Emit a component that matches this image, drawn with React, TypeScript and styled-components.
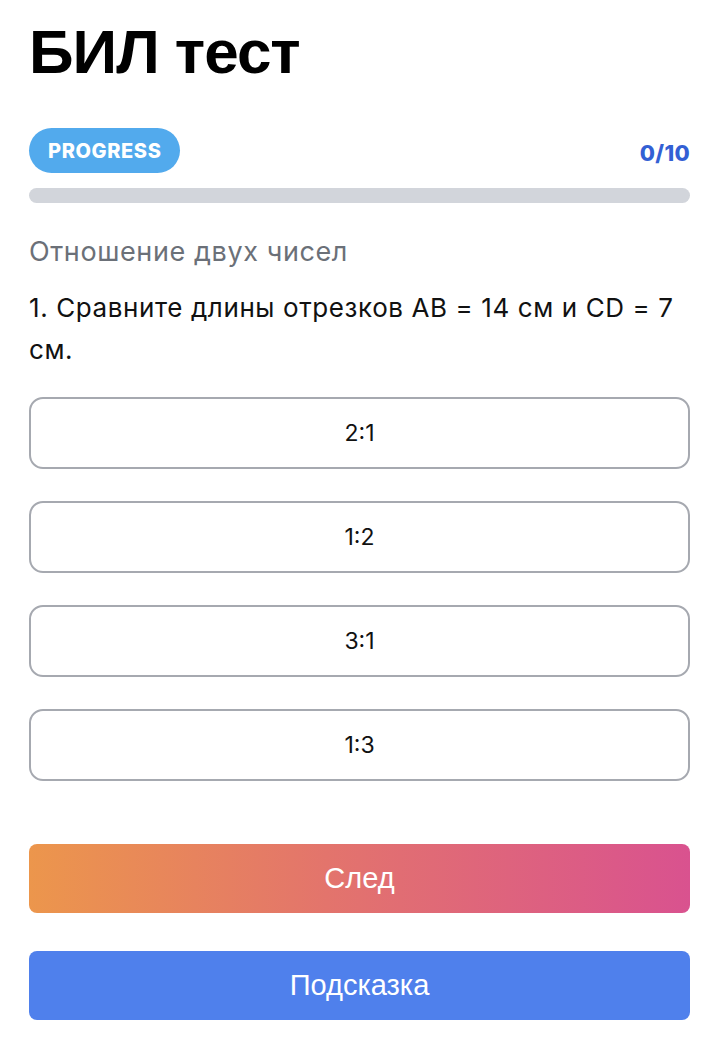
import React from 'react';
import styled, { createGlobalStyle } from 'styled-components';

const GlobalStyle = createGlobalStyle`
  body {
    margin: 0;
    background: #ffffff;
  }
`;

const Page = styled.div`
  padding: 12px 27px 26px 29px;
  display: flex;
  flex-direction: column;
  font-family: 'Inter', 'Noto Sans', sans-serif;
`;

const Title = styled.h1`
  margin: 0;
  font-family: 'Liberation Sans', Arial, sans-serif;
  font-size: 62px;
  font-weight: 700;
  letter-spacing: -1px;
  color: #000;
  line-height: 80px;
`;

const ProgressHeader = styled.div`
  margin-top: 36px;
  display: flex;
  align-items: center;
  justify-content: space-between;
`;

const Badge = styled.span`
  display: inline-flex;
  align-items: center;
  height: 45px;
  padding: 0 19px;
  border-radius: 23px;
  background: #52aaed;
  color: #fff;
  font-size: 20px;
  font-weight: 800;
  letter-spacing: 0.6px;
`;

const Counter = styled.span`
  font-size: 22px;
  font-weight: 800;
  color: #3360d4;
  margin-top: 4px;
  letter-spacing: 0.3px;
`;

const Track = styled.div`
  margin-top: 15px;
  height: 15px;
  border-radius: 8px;
  background: #d2d5db;
  overflow: hidden;
`;

const Fill = styled.div`
  height: 100%;
  background: #52aaed;
`;

const Topic = styled.div`
  margin-top: 32px;
  font-size: 27px;
  color: #6b7078;
  letter-spacing: 0.6px;
`;

const Question = styled.p`
  margin: 19px 0 0;
  font-size: 26px;
  line-height: 42px;
  color: #111;
  letter-spacing: 0.6px;
`;

const Options = styled.div`
  margin-top: 26px;
  display: flex;
  flex-direction: column;
  gap: 32px;
`;

const Option = styled.button`
  height: 72px;
  border: 2px solid #a6a9b0;
  border-radius: 14px;
  background: #fff;
  font-family: 'Inter', 'Noto Sans', sans-serif;
  font-size: 23px;
  color: #111;
  cursor: pointer;
`;

const Actions = styled.div`
  margin-top: 63px;
  display: flex;
  flex-direction: column;
  gap: 38px;
`;

const ActionButton = styled.button<{ $variant: 'next' | 'hint' }>`
  height: 69px;
  border: none;
  border-radius: 8px;
  color: #fff;
  font-family: 'Liberation Sans', Arial, sans-serif;
  font-size: 29px;
  cursor: pointer;
  background: ${p =>
    p.$variant === 'next'
      ? 'linear-gradient(90deg, #ec964c 0%, #e3746c 45%, #d9528f 100%)'
      : '#4f80ec'};
`;

const answers = ['2:1', '1:2', '3:1', '1:3'];

const App = () => {
  const done = 0;
  const total = 10;

  return (
    <>
      <GlobalStyle />
      <Page>
        <Title>БИЛ тест</Title>
        <ProgressHeader>
          <Badge>PROGRESS</Badge>
          <Counter>{done}/{total}</Counter>
        </ProgressHeader>
        <Track>
          <Fill style={{ width: `${(done / total) * 100}%` }} />
        </Track>
        <Topic>Отношение двух чисел</Topic>
        <Question>1. Сравните длины отрезков AB = 14 см и CD = 7 см.</Question>
        <Options>
          {answers.map(a => (
            <Option key={a}>{a}</Option>
          ))}
        </Options>
        <Actions>
          <ActionButton $variant='next'>След</ActionButton>
          <ActionButton $variant='hint'>Подсказка</ActionButton>
        </Actions>
      </Page>
    </>
  );
};

export default App;
